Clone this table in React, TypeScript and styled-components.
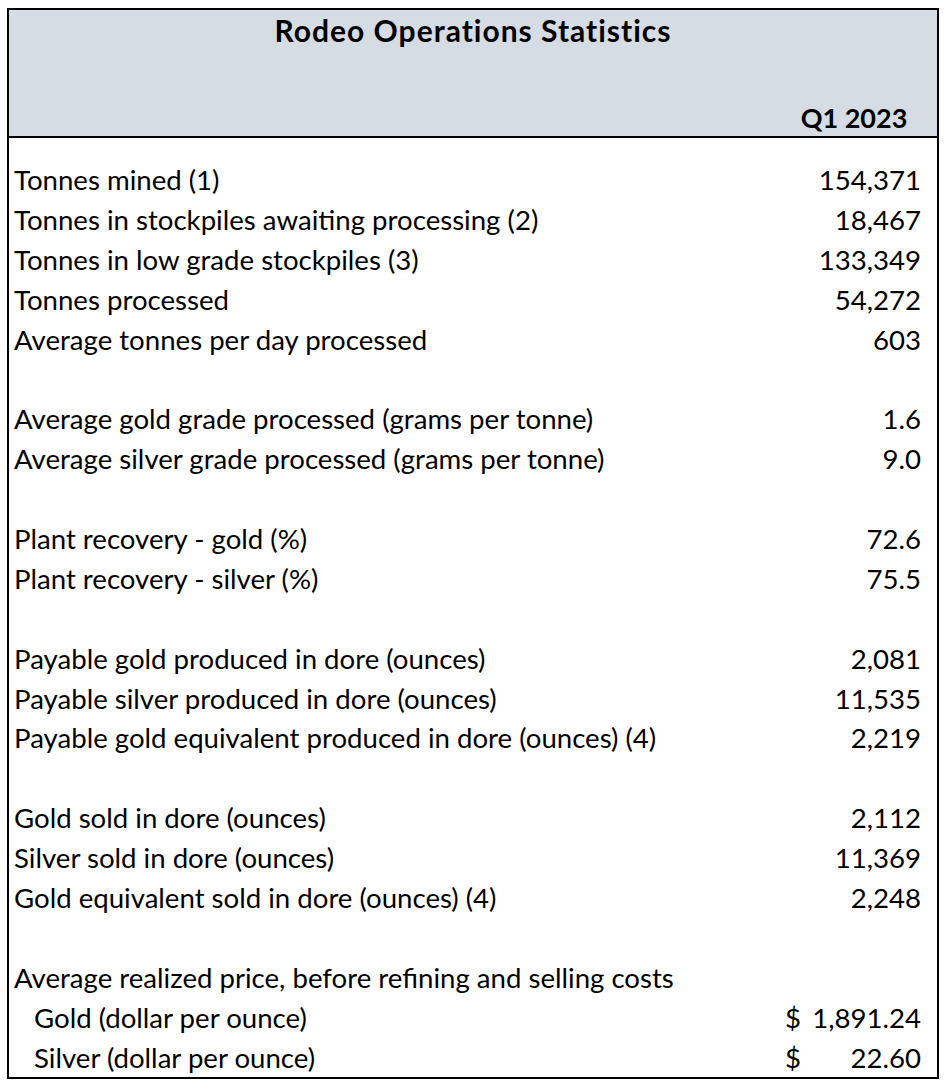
import React from 'react';
import styled, { createGlobalStyle } from 'styled-components';

interface IRow {
  label?: string;
  value?: string;
  dollar?: boolean;
  indent?: boolean;
}

const rows: IRow[] = [
  { label: 'Tonnes mined (1)', value: '154,371' },
  { label: 'Tonnes in stockpiles awaiting processing (2)', value: '18,467' },
  { label: 'Tonnes in low grade stockpiles (3)', value: '133,349' },
  { label: 'Tonnes processed', value: '54,272' },
  { label: 'Average tonnes per day processed', value: '603' },
  {},
  { label: 'Average gold grade processed (grams per tonne)', value: '1.6' },
  { label: 'Average silver grade processed (grams per tonne)', value: '9.0' },
  {},
  { label: 'Plant recovery - gold (%)', value: '72.6' },
  { label: 'Plant recovery - silver (%)', value: '75.5' },
  {},
  { label: 'Payable gold produced in dore (ounces)', value: '2,081' },
  { label: 'Payable silver produced in dore (ounces)', value: '11,535' },
  { label: 'Payable gold equivalent produced in dore (ounces) (4)', value: '2,219' },
  {},
  { label: 'Gold sold in dore (ounces)', value: '2,112' },
  { label: 'Silver sold in dore (ounces)', value: '11,369' },
  { label: 'Gold equivalent sold in dore (ounces) (4)', value: '2,248' },
  {},
  { label: 'Average realized price, before refining and selling costs' },
  { label: 'Gold (dollar per ounce)', value: '1,891.24', dollar: true, indent: true },
  { label: 'Silver (dollar per ounce)', value: '22.60', dollar: true, indent: true },
];

const GlobalStyle = createGlobalStyle`
  body {
    margin: 0;
    background: #ffffff;
    font-family: Lato, "Open Sans", sans-serif;
    color: #000000;
  }
`;

const Sheet = styled.div`
  box-sizing: border-box;
  width: 932px;
  margin: 8px 0 0 7px;
  border: 2px solid #000000;
  font-size: 27.6px;
`;

const Header = styled.div`
  height: 128px;
  box-sizing: border-box;
  background-color: #d6dce4;
  border-bottom: 2px solid #000000;
  display: flex;
  flex-direction: column;
  justify-content: space-between;
  font-weight: 700;
`;

const Title = styled.div`
  height: 40px;
  line-height: 40px;
  text-align: center;
  font-size: 30px;
  letter-spacing: 1px;
`;

const PeriodRow = styled.div`
  display: grid;
  grid-template-columns: 1fr 166px;
  height: 36px;
  line-height: 36px;
  font-size: 27px;
`;

const Period = styled.div`
  grid-column: 2;
  text-align: center;
`;

const Body = styled.div`
  padding-top: 22px;
`;

const Row = styled.div`
  display: grid;
  grid-template-columns: 1fr 166px;
  height: 39.9px;
  line-height: 39.9px;
  white-space: nowrap;
`;

const Label = styled.div<{ $indent?: boolean }>`
  padding-left: ${(p) => (p.$indent ? '25px' : '5px')};
`;

const Value = styled.div`
  display: flex;
  justify-content: space-between;
  padding: 0 16px 0 14px;
`;

const Amount = styled.span`
  margin-left: auto;
`;

export default function App() {
  return (
    <>
      <GlobalStyle />
      <Sheet>
        <Header>
          <Title>Rodeo Operations Statistics</Title>
          <PeriodRow>
            <Period>Q1 2023</Period>
          </PeriodRow>
        </Header>
        <Body>
          {rows.map((r, i) => (
            <Row key={i}>
              <Label $indent={r.indent}>{r.label}</Label>
              <Value>
                {r.dollar && <span>$</span>}
                <Amount>{r.value}</Amount>
              </Value>
            </Row>
          ))}
        </Body>
      </Sheet>
    </>
  );
}
